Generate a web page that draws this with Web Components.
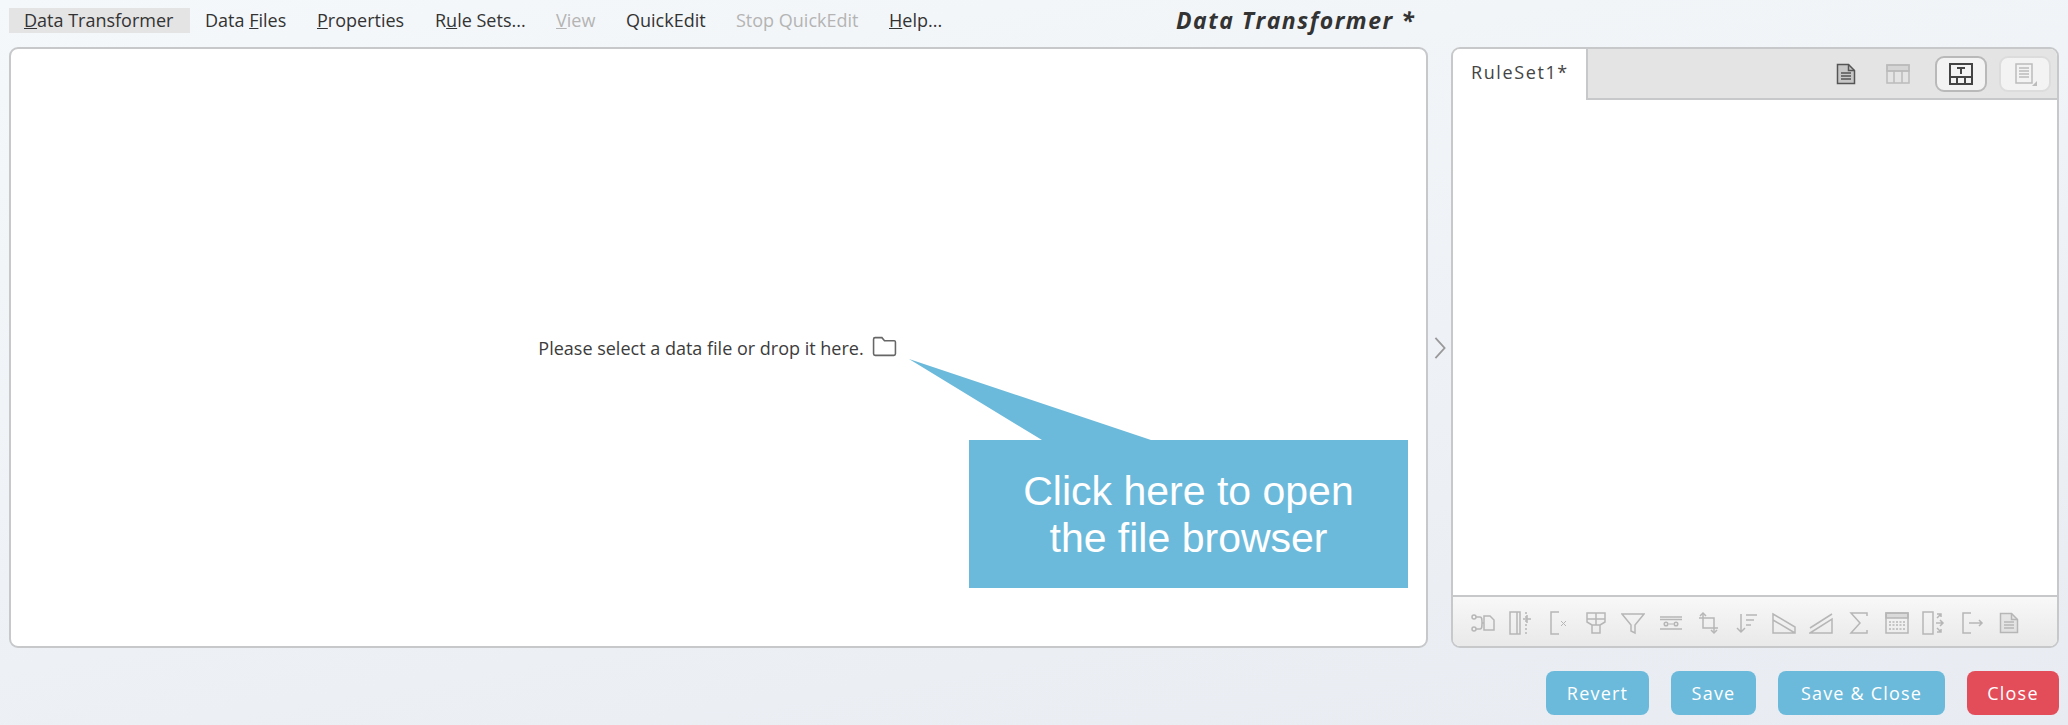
<!DOCTYPE html>
<html>
<head>
<meta charset="utf-8">
<title>Data Transformer</title>
<style>
  html, body { margin: 0; height: 100%; }
  body { font-family: "Open Sans", "Liberation Sans", sans-serif; color: #333; }
</style>
</head>
<body>
<dt-app>
  <dt-menubar slot="menu" heading="Data Transformer *">
    <dt-menu-item active style="width:181px"><u>D</u>ata Transformer</dt-menu-item>
    <dt-menu-item style="width:112px">Data <u>F</u>iles</dt-menu-item>
    <dt-menu-item style="width:118px"><u>P</u>roperties</dt-menu-item>
    <dt-menu-item style="width:121px">R<u>u</u>le Sets...</dt-menu-item>
    <dt-menu-item disabled style="width:70px"><u>V</u>iew</dt-menu-item>
    <dt-menu-item style="width:110px">QuickEdit</dt-menu-item>
    <dt-menu-item disabled style="width:153px">Stop QuickEdit</dt-menu-item>
    <dt-menu-item><u>H</u>elp...</dt-menu-item>
  </dt-menubar>
  <dt-drop-area slot="left">
    Please select a data file or drop it here.
    <dt-callout slot="callout">Click here to open<br>the file browser</dt-callout>
  </dt-drop-area>
  <dt-rule-panel slot="right" tab="RuleSet1*"></dt-rule-panel>
  <dt-button slot="actions" style="width:103px">Revert</dt-button>
  <dt-button slot="actions" style="width:85px">Save</dt-button>
  <dt-button slot="actions" style="width:167px">Save &amp; Close</dt-button>
  <dt-button slot="actions" danger style="width:92px">Close</dt-button>
</dt-app>

<script>
const ICONS = {
  folder: '<path d="M1.5 5A1.5 1.5 0 0 1 3 3.500h6.500l2.500 3h8.500A1.500 1.500 0 0 1 22.500 8v11a1.500 1.500 0 0 1-1.500 1.500H3A1.500 1.500 0 0 1 1.500 19z"/>',
  chevron: '<path d="M7 1l10 11-10 11" stroke-width="2"/>',
  doc: '<path d="M3.500 2.500h11l6 6v13h-17z" fill="currentColor" fill-opacity=".2"/><path d="M14.500 2.500v6h6M7 11h10M7 14h10M7 17h10"/>',
  table: '<path d="M1 3h22v18H1zM1 9h22M8 9v12M16 9v12"/><path d="M1 3h22v6H1z" fill="currentColor" fill-opacity=".35"/>',
  layout: '<path d="M1 2h22v20H1zM1 15h22M8 15v7M16 15v7" stroke-width="2"/><path d="M8 6h8M12 6v6" stroke-width="2"/>',
  listdoc: '<path d="M3 2h16v19H3zM6 6h10M6 9h10M6 12h10M6 15h10"/><path d="M24 19v5h-5z" fill="currentColor" stroke="none"/>',
  connect: '<circle cx="3" cy="6" r="2"/><circle cx="3" cy="18" r="2"/><path d="M5 6h4c2 0 2 2 2 6s0 6-2 6H5M11 12h2M13 5h6l4 4v10H13z"/>',
  coladd: '<path d="M1 1h10v22H1zM8 1v22"/><path d="M17 1v22" stroke-dasharray="2 2"/><path d="M14 8h8M18 4v8"/>',
  colremove: '<path d="M13 1H5v22h8"/><path d="M15 10l5 5M20 10l-5 5" stroke-width="1"/>',
  pivot: '<path d="M3 2h18v9l-5 3v8H8v-8l-5-3zM3 8h18M12 2v12M8 14h8"/>',
  filter: '<path d="M1 3h22l-9 11v8l-4-2v-6z"/>',
  rows: '<path d="M1 6h22M1 18h22M1 8.500h22" /><circle cx="7" cy="13" r="1.800"/><circle cx="17" cy="13" r="1.800"/><path d="M9.500 13h5" stroke-width="1"/>',
  crop: '<path d="M6 3v14h15M2 7h15v15"/><path d="M3 5l3-3 3 3M14 19l3 3 3-3"/>',
  sort: '<path d="M7 3v18M3 17l4 4 4-4M12 4h11M12 9h8M12 14h5"/>',
  down: '<path d="M1 3l22 13v6H1zM1 9l22 13"/>',
  up: '<path d="M1 22l22-14v14zM1 17L23 3"/>',
  sigma: '<path d="M20 5V2H4l9 10-9 10h16v-3"/>',
  grid: '<path d="M1 2h22v20H1z"/><path d="M1 2h22v5H1z" fill="currentColor" fill-opacity=".4"/><path d="M4 11h16M4 14h16M4 18h16" stroke-dasharray="2 1.500"/>',
  colmove: '<path d="M1 1h10v22H1z"/><path d="M15 3h4v3M19 3l-4 4M14 12h7M18 9l3 3-3 3M15 21h4v-3M19 21l-4-4"/>',
  exit: '<path d="M11 2H3v20h8M9 12h13M19 9l3 3-3 3"/>'
};

const iconTemplate = document.createElement("template");
iconTemplate.innerHTML = `
  <style>
    :host { display: inline-flex; width: 24px; height: 24px; flex: none; }
    svg { width: 100%; height: 100%; fill: none; stroke: currentColor; stroke-width: 1.5; }
  </style>
  <svg viewBox="0 0 24 24"></svg>
`;
class DtIcon extends HTMLElement {
  constructor() {
    super();
    this.attachShadow({ mode: "open" }).appendChild(iconTemplate.content.cloneNode(true));
  }
  connectedCallback() {
    this.shadowRoot.querySelector("svg").innerHTML = ICONS[this.getAttribute("name")] || "";
  }
}
customElements.define("dt-icon", DtIcon);

const appTemplate = document.createElement("template");
appTemplate.innerHTML = `
  <style>
    :host {
      display: flex;
      flex-direction: column;
      height: 725px;
      box-sizing: border-box;
      padding: 0 9px 10px 9px;
      background: linear-gradient(170deg, #f5f8fa 0%, #e8ecf2 100%);
      overflow: hidden;
    }
    .main { flex: 1; display: flex; min-height: 0; }
    .gutter {
      width: 23px;
      flex: none;
      display: flex;
      align-items: center;
      justify-content: center;
      color: #999;
    }
    .gutter dt-icon { width: 22px; height: 22px; }
    .actions {
      display: flex;
      justify-content: flex-end;
      gap: 22px;
      padding-top: 23px;
    }
    ::slotted([slot="left"]) { flex: none; width: 1419px; }
    ::slotted([slot="right"]) { flex: 1; }
  </style>
  <slot name="menu"></slot>
  <div class="main">
    <slot name="left"></slot>
    <div class="gutter"><dt-icon name="chevron"></dt-icon></div>
    <slot name="right"></slot>
  </div>
  <div class="actions"><slot name="actions"></slot></div>
`;
class DtApp extends HTMLElement {
  constructor() {
    super();
    this.attachShadow({ mode: "open" }).appendChild(appTemplate.content.cloneNode(true));
  }
}
customElements.define("dt-app", DtApp);

const menubarTemplate = document.createElement("template");
menubarTemplate.innerHTML = `
  <style>
    :host {
      display: flex;
      align-items: flex-start;
      height: 47px;
      flex: none;
      padding-top: 6px;
      box-sizing: border-box;
    }
    .items { display: flex; margin-top: 2px; }
    h1 {
      margin: 0 0 0 auto;
      width: 883px;
      font: italic 700 23px/28px "Open Sans", sans-serif;
      letter-spacing: 1.500px;
      color: #333;
      white-space: nowrap;
    }
  </style>
  <div class="items"><slot></slot></div>
  <h1></h1>
`;
class DtMenubar extends HTMLElement {
  constructor() {
    super();
    this.attachShadow({ mode: "open" }).appendChild(menubarTemplate.content.cloneNode(true));
  }
  connectedCallback() {
    this.shadowRoot.querySelector("h1").textContent = this.getAttribute("heading");
  }
}
customElements.define("dt-menubar", DtMenubar);

const menuItemTemplate = document.createElement("template");
menuItemTemplate.innerHTML = `
  <style>
    :host {
      display: block;
      height: 25px;
      line-height: 25px;
      font-size: 18px;
      padding-left: 15px;
      box-sizing: border-box;
      white-space: nowrap;
      color: #333;
    }
    :host([active]) { background: #e4e4e4; }
    :host([disabled]) { color: #b4b4b4; }
  </style>
  <slot></slot>
`;
class DtMenuItem extends HTMLElement {
  constructor() {
    super();
    this.attachShadow({ mode: "open" }).appendChild(menuItemTemplate.content.cloneNode(true));
  }
}
customElements.define("dt-menu-item", DtMenuItem);

const dropTemplate = document.createElement("template");
dropTemplate.innerHTML = `
  <style>
    :host {
      display: flex;
      position: relative;
      align-items: center;
      justify-content: center;
      gap: 8px;
      box-sizing: border-box;
      background: #fff;
      border: 2px solid #c6c8ca;
      border-radius: 9px;
      font-size: 18px;
      color: #3c3c3c;
    }
    span { margin-left: -2px; }
    dt-icon { color: #666; width: 25px; height: 25px; position: relative; top: -1px; }
  </style>
  <span><slot></slot></span>
  <dt-icon name="folder"></dt-icon>
  <slot name="callout"></slot>
`;
class DtDropArea extends HTMLElement {
  constructor() {
    super();
    this.attachShadow({ mode: "open" }).appendChild(dropTemplate.content.cloneNode(true));
  }
}
customElements.define("dt-drop-area", DtDropArea);

const calloutTemplate = document.createElement("template");
calloutTemplate.innerHTML = `
  <style>
    :host {
      position: absolute;
      left: 958px;
      top: 391px;
      width: 439px;
      height: 148px;
      display: flex;
      align-items: center;
      justify-content: center;
      text-align: center;
      background: #6cbadb;
      color: #fff;
      font: 41px/47px "Liberation Sans", Arial, sans-serif;
      padding-top: 2px;
      box-sizing: border-box;
    }
    svg { position: absolute; left: -60px; top: -81px; width: 243px; height: 82px; fill: #6cbadb; }
  </style>
  <svg viewBox="0 0 243 82"><polygon points="0,0 242,81 133,82 133,81"/></svg>
  <div><slot></slot></div>
`;
class DtCallout extends HTMLElement {
  constructor() {
    super();
    this.attachShadow({ mode: "open" }).appendChild(calloutTemplate.content.cloneNode(true));
  }
}
customElements.define("dt-callout", DtCallout);

const rulePanelTemplate = document.createElement("template");
rulePanelTemplate.innerHTML = `
  <style>
    :host {
      display: flex;
      flex-direction: column;
      box-sizing: border-box;
      border: 2px solid #c6c8ca;
      border-radius: 9px;
      background: #fff;
      overflow: hidden;
    }
    .head { display: flex; height: 51px; flex: none; background: #e4e4e4; }
    .tab {
      width: 135px;
      box-sizing: border-box;
      background: #fff;
      border-right: 2px solid #c6c8ca;
      padding: 11px 0 0 18px;
      font-size: 18px;
      letter-spacing: 1.600px;
      color: #444;
    }
    .tools {
      flex: 1;
      display: flex;
      align-items: center;
      justify-content: flex-end;
      gap: 12px;
      padding-right: 6px;
      border-bottom: 2px solid #c6c8ca;
    }
    .tools .plain { color: #555; margin-right: 16px; }
    .tools .off { color: #bbb; margin-right: 13px; }
    .tool-btn {
      width: 52px;
      height: 36px;
      box-sizing: border-box;
      border: 2px solid #b9b9b9;
      border-radius: 9px;
      background: #f3f3f3;
      display: flex;
      align-items: center;
      justify-content: center;
      color: #444;
    }
    .tool-btn.dim { border-color: #dcdcdc; color: #bcbcbc; }
    .body { flex: 1; }
    .foot {
      height: 51px;
      flex: none;
      display: flex;
      align-items: center;
      gap: 13.600px;
      padding: 3px 0 0 18px;
      box-sizing: border-box;
      border-top: 2px solid #c6c8ca;
      background: linear-gradient(#f8f8f8, #e9e9e9);
      color: #b6b6b6;
    }
  </style>
  <div class="head">
    <div class="tab"></div>
    <div class="tools">
      <dt-icon class="plain" name="doc"></dt-icon>
      <dt-icon class="off" name="table"></dt-icon>
      <div class="tool-btn"><dt-icon name="layout"></dt-icon></div>
      <div class="tool-btn dim"><dt-icon name="listdoc"></dt-icon></div>
    </div>
  </div>
  <div class="body"></div>
  <div class="foot"></div>
`;
class DtRulePanel extends HTMLElement {
  constructor() {
    super();
    this.attachShadow({ mode: "open" }).appendChild(rulePanelTemplate.content.cloneNode(true));
  }
  connectedCallback() {
    this.shadowRoot.querySelector(".tab").textContent = this.getAttribute("tab");
    const foot = this.shadowRoot.querySelector(".foot");
    const names = ["connect", "coladd", "colremove", "pivot", "filter", "rows", "crop", "sort", "down", "up", "sigma", "grid", "colmove", "exit", "doc"];
    names.forEach(n => {
      const icon = document.createElement("dt-icon");
      icon.setAttribute("name", n);
      foot.appendChild(icon);
    });
  }
}
customElements.define("dt-rule-panel", DtRulePanel);

const buttonTemplate = document.createElement("template");
buttonTemplate.innerHTML = `
  <style>
    :host {
      display: flex;
      align-items: center;
      justify-content: center;
      height: 44px;
      border-radius: 8px;
      background: #6cbadb;
      color: #fff;
      font-size: 18px;
      letter-spacing: 1.200px;
    }
    :host([danger]) { background: #e34d5a; }
  </style>
  <slot></slot>
`;
class DtButton extends HTMLElement {
  constructor() {
    super();
    this.attachShadow({ mode: "open" }).appendChild(buttonTemplate.content.cloneNode(true));
  }
}
customElements.define("dt-button", DtButton);
</script>
</body>
</html>
